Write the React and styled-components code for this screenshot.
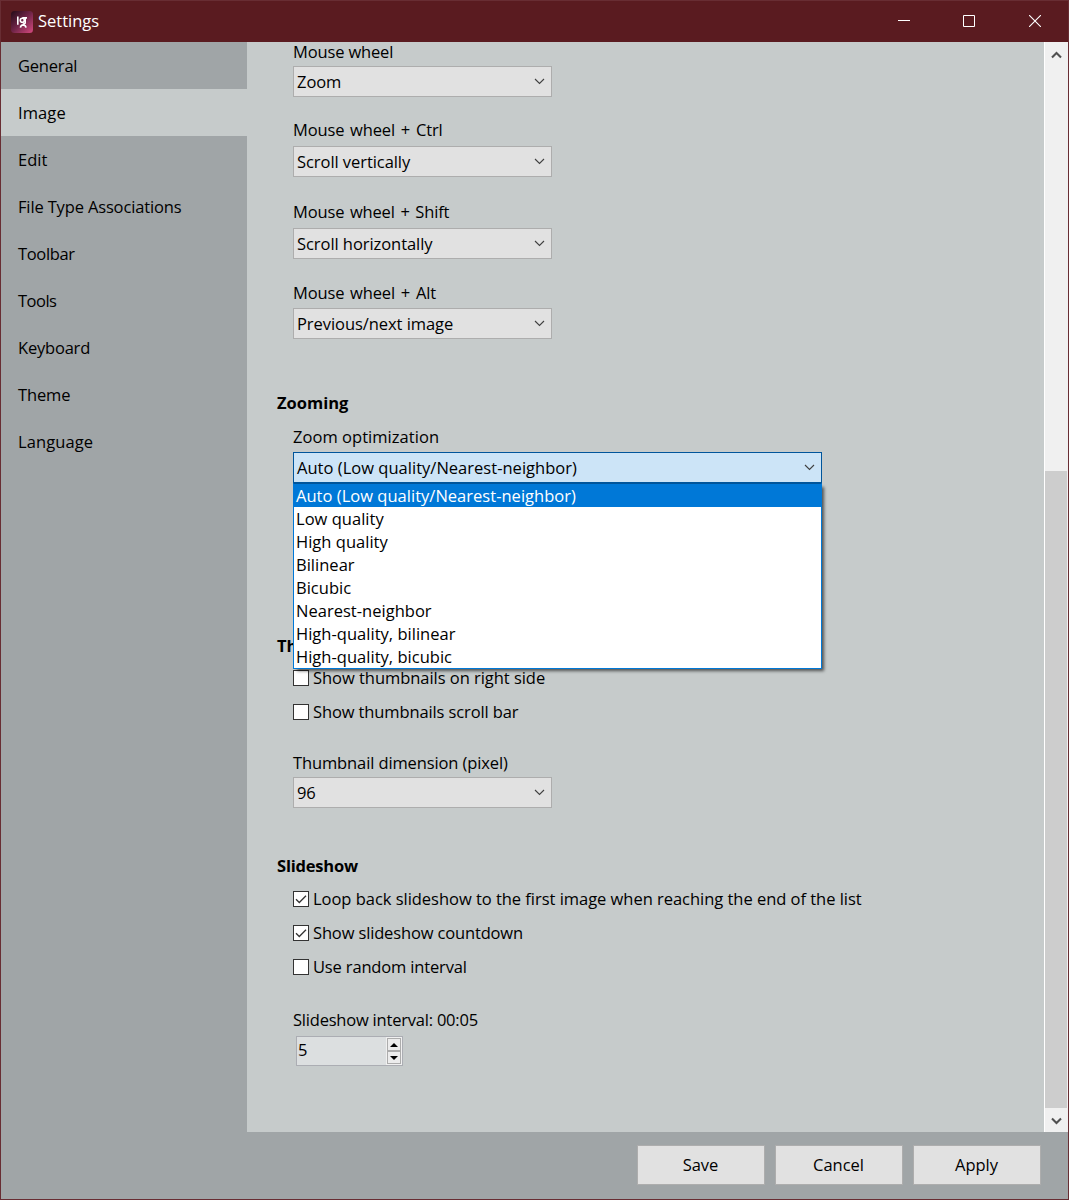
import React from "react";
import styled, { createGlobalStyle, css } from "styled-components";

const GlobalStyle = createGlobalStyle`
  *, *::before, *::after { box-sizing: border-box; }
  body { margin: 0; }
`;

const Window = styled.div`
  display: grid;
  grid-template-columns: 246px 1fr;
  grid-template-rows: 41px 1fr 67px;
  width: 1069px;
  height: 1200px;
  border: 1px solid #682d33;
  overflow: hidden;
  background: #a0a5a7;
  color: #000;
  font: 16.5px/20px "Open Sans", "Noto Sans", sans-serif;
  white-space: nowrap;
`;

const TitleBar = styled.header`
  grid-column: 1 / -1;
  display: flex;
  align-items: center;
  padding-left: 10px;
  background: #5a1b20;
  color: #fff;
`;

const Title = styled.h1`
  flex: 1;
  margin: 0 0 1px 5px;
  font: inherit;
`;

const WindowButton = styled.button`
  display: flex;
  align-items: center;
  justify-content: center;
  width: 65.5px;
  height: 41px;
  padding: 0 0 1px;
  border: 0;
  background: none;
  color: #fff;
`;

const WindowButtons = styled.div`
  display: flex;
  width: 197px;
  margin-right: 0;
`;

const Sidebar = styled.nav`
  display: flex;
  flex-direction: column;
`;

const NavItem = styled.a`
  display: flex;
  align-items: center;
  height: 47px;
  padding: 1px 0 0 17px;
  letter-spacing: ${(p) => p.$track || 0}px;
  background: ${(p) => (p.$active ? "#c6cbcb" : "transparent")};
`;

const Main = styled.main`
  display: flex;
  min-height: 0;
  background: #c6cbcb;
`;

const Content = styled.div`
  flex: 1;
  display: flex;
  flex-direction: column;
  padding-left: 30px;
`;

const Heading = styled.h2`
  height: 20px;
  margin: ${(p) => p.$top}px 0 0;
  font: inherit;
  font-weight: 700;
  letter-spacing: ${(p) => p.$track || 0}px;
`;

const Group = styled.section`
  display: flex;
  flex-direction: column;
  align-items: flex-start;
  padding-left: 16px;
`;

const Label = styled.label`
  height: 20px;
  margin-top: ${(p) => p.$top || 0}px;
  letter-spacing: ${(p) => p.$track || 0}px;
  word-spacing: ${(p) => p.$word || 0}px;
`;

const Select = styled.div`
  position: relative;
  display: flex;
  align-items: center;
  justify-content: space-between;
  width: ${(p) => (p.$open ? 529 : 259)}px;
  height: 31px;
  margin-top: ${(p) => p.$top}px;
  padding: 0 6px 0 3px;
  letter-spacing: ${(p) => (p.$open ? 0.02 : -0.06)}px;
  border: 1px solid ${(p) => (p.$open ? "#00559b" : "#adadad")};
  background: ${(p) => (p.$open ? "#cce4f7" : "#e1e1e1")};
`;

const Menu = styled.ul`
  position: absolute;
  z-index: 1;
  top: 30px;
  left: -1px;
  width: 529px;
  margin: 0;
  padding: 0;
  list-style: none;
  border: 1px solid #0078d7;
  border-top-color: #00559b;
  background: #fff;
  box-shadow: 3px 3px 3px -1px rgba(0, 0, 0, 0.6);
`;

const Option = styled.li`
  height: 23px;
  padding: 2px 0 0 2px;
  ${(p) =>
    p.$selected &&
    css`
      background: #0078d7;
      color: #fff;
    `}
`;

const CheckRow = styled.label`
  display: flex;
  align-items: center;
  gap: 4px;
  height: 20px;
  margin-top: ${(p) => p.$top}px;
  letter-spacing: ${(p) => p.$track || 0}px;
`;

const Box = styled.span`
  display: flex;
  width: 16px;
  height: 16px;
  border: 1px solid #333;
  background: #fff;
`;

const Spinner = styled.div`
  display: flex;
  justify-content: space-between;
  align-items: center;
  width: 107px;
  height: 30px;
  margin: 6px 0 0 3px;
  border: 1px solid #abadb3;
  background: #dcdfe0;
`;

const SpinValue = styled.span`
  padding: 0 0 2px 1px;
`;

const SpinButtons = styled.div`
  display: flex;
  flex-direction: column;
  width: 16px;
  height: 28px;
  padding: 1px;
  background: #f0f0f0;
`;

const SpinButton = styled.button`
  flex: 1;
  display: flex;
  align-items: center;
  justify-content: center;
  padding: 0;
  border: 1px solid #acacac;
  background: #ececec;
`;

const ScrollBar = styled.div`
  display: flex;
  flex-direction: column;
  width: 25px;
  padding-right: 1px;
  border-left: 2px solid #fff;
  border-left-width: 1px;
  margin-left: 1px;
  margin-right: -1px;
  padding-right: 2px;
  background: #f0f0f0;
`;

const ScrollArrow = styled.div`
  display: flex;
  align-items: center;
  justify-content: center;
  height: 24px;
  padding-top: 1px;
`;

const ScrollTrack = styled.div`
  flex: 1;
  display: flex;
  flex-direction: column;
  justify-content: flex-end;
`;

const ScrollThumb = styled.div`
  height: 637px;
  background: #cdcdcd;
`;

const Footer = styled.footer`
  grid-column: 1 / -1;
  display: flex;
  justify-content: flex-end;
  gap: 10px;
  padding: 13px 27px 0 0;
`;

const Button = styled.button`
  width: 128px;
  height: 40px;
  padding: 0 1px 1px 0;
  border: 1px solid #adadad;
  background: #e1e1e1;
  color: #000;
  font: inherit;
`;

const Logo = () => (
  <svg width="22" height="22" viewBox="0 0 22 22">
    <defs>
      <linearGradient id="logo" x1="0" y1="0" x2="1" y2="1">
        <stop offset="0" stopColor="#240b17" />
        <stop offset="0.5" stopColor="#712549" />
        <stop offset="1" stopColor="#d64a80" />
      </linearGradient>
    </defs>
    <rect width="22" height="22" rx="3.5" fill="url(#logo)" />
    <g fill="none" stroke="#fff" strokeWidth="1.6">
      <path d="M6.8 5.6v8.2" />
      <circle cx="11.3" cy="9.2" r="2" />
      <path d="M16 6.9h-4.7M14.2 6.9v5.2l-2.4 1.4M9.4 16.6q.4-2.6 2.8-2.7 2.4.1 2.8 2.7" />
    </g>
  </svg>
);

const Chevron = () => (
  <svg width="11" height="7" viewBox="0 0 11 7" fill="none" stroke="#404040" strokeWidth="1.1">
    <path d="M1 1l4.5 4.5L10 1" />
  </svg>
);

const ScrollChevron = ({ d }) => (
  <svg width="11" height="8" viewBox="0 0 11 8" fill="none" stroke="#505050" strokeWidth="2.1">
    <path d={d} />
  </svg>
);

const Check = ({ on, top, track, children }) => (
  <CheckRow $top={top} $track={track}>
    <Box>
      {on && (
        <svg width="14" height="14" viewBox="0 0 14 14" fill="none" stroke="#333" strokeWidth="1.3">
          <path d="M2 7.2l3.3 3.3L12 3.8" />
        </svg>
      )}
    </Box>
    {children}
  </CheckRow>
);

const Field = ({ label, value, top, gap, track, word }) => (
  <>
    <Label $top={top} $track={track} $word={word}>{label}</Label>
    <Select $top={gap}>
      {value}
      <Chevron />
    </Select>
  </>
);

const NAV = [
  ["General", -0.2],
  ["Image", 0.1],
  ["Edit", 0],
  ["File Type Associations", -0.15],
  ["Toolbar", -0.35],
  ["Tools", -0.5],
  ["Keyboard", -0.2],
  ["Theme", -0.15],
  ["Language", 0.1],
];

const OPTIONS = [
  "Auto (Low quality/Nearest-neighbor)",
  "Low quality",
  "High quality",
  "Bilinear",
  "Bicubic",
  "Nearest-neighbor",
  "High-quality, bilinear",
  "High-quality, bicubic",
];

export default function App() {
  return (
    <Window>
      <GlobalStyle />
      <TitleBar>
        <Logo />
        <Title>Settings</Title>
        <WindowButtons>
          <WindowButton aria-label="Minimize">
            <svg width="12" height="12" stroke="currentColor"><path d="M0 5.5h12" /></svg>
          </WindowButton>
          <WindowButton aria-label="Maximize">
            <svg width="12" height="12" stroke="currentColor" fill="none"><path d="M.5.5h11v11H.5z" /></svg>
          </WindowButton>
          <WindowButton aria-label="Close">
            <svg width="12" height="12" stroke="currentColor" strokeWidth="1.1"><path d="M0 0l12 12M12 0L0 12" /></svg>
          </WindowButton>
        </WindowButtons>
      </TitleBar>

      <Sidebar>
        {NAV.map(([name, track]) => (
          <NavItem key={name} $active={name === "Image"} $track={track}>{name}</NavItem>
        ))}
      </Sidebar>

      <Main>
        <Content>
          <Group>
            <Field label="Mouse wheel" value="Zoom" gap={4} track={-0.15} />
            <Field label="Mouse wheel + Ctrl" value="Scroll vertically" top={23} gap={6} track={-0.15} word={1.7} />
            <Field label="Mouse wheel + Shift" value="Scroll horizontally" top={25} gap={6} track={-0.15} word={1.5} />
            <Field label="Mouse wheel + Alt" value="Previous/next image" top={24} gap={5} track={-0.15} word={1.7} />
          </Group>

          <Heading $top={54}>Zooming</Heading>
          <Group>
            <Label $top={14} $track={0.04}>Zoom optimization</Label>
            <Select $open $top={5}>
              {OPTIONS[0]}
              <Chevron />
              <Menu>
                {OPTIONS.map((name, i) => (
                  <Option key={name} $selected={i === 0}>{name}</Option>
                ))}
              </Menu>
            </Select>
          </Group>

          <Heading $top={153}>Thumbnail bar</Heading>
          <Group>
            <Check top={12} track={-0.04}>Show thumbnails on right side</Check>
            <Check top={14} track={-0.12}>Show thumbnails scroll bar</Check>
            <Field label="Thumbnail dimension (pixel)" value="96" top={31} gap={4} track={-0.12} />
          </Group>

          <Heading $top={48} $track={-0.2}>Slideshow</Heading>
          <Group>
            <Check on top={13} track={-0.03}>Loop back slideshow to the first image when reaching the end of the list</Check>
            <Check on top={14} track={-0.15}>Show slideshow countdown</Check>
            <Check top={14} track={-0.16}>Use random interval</Check>
            <Label $top={33} $track={-0.21}>Slideshow interval: 00:05</Label>
            <Spinner>
              <SpinValue>5</SpinValue>
              <SpinButtons>
                <SpinButton aria-label="Increase">
                  <svg width="8" height="4"><path d="M0 4L4 0l4 4z" /></svg>
                </SpinButton>
                <SpinButton aria-label="Decrease">
                  <svg width="8" height="4"><path d="M0 0l4 4 4-4z" /></svg>
                </SpinButton>
              </SpinButtons>
            </Spinner>
          </Group>
        </Content>

        <ScrollBar>
          <ScrollArrow><ScrollChevron d="M1 6.5l4.5-4.5L10 6.5" /></ScrollArrow>
          <ScrollTrack><ScrollThumb /></ScrollTrack>
          <ScrollArrow><ScrollChevron d="M1 1.5l4.5 4.5L10 1.5" /></ScrollArrow>
        </ScrollBar>
      </Main>

      <Footer>
        <Button>Save</Button>
        <Button>Cancel</Button>
        <Button>Apply</Button>
      </Footer>
    </Window>
  );
}
